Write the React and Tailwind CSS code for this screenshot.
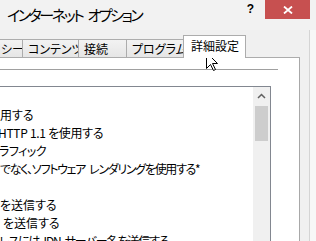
import React from "react";

const jp = "font-['Noto_Sans_CJK_JP','Noto_Sans',sans-serif] [font-feature-settings:'palt']";

// 左側が切れている設定リストの行（語の区切りは配列で持つ）
const rows = [
  { parts: [], cls: "ml-0" },
  { parts: ["用する"], cls: "ml-0" },
  { parts: ["HTTP 1.1 を使用する"], cls: "-ml-[2px] tracking-[-0.3px]" },
  { parts: ["ラフィック"], cls: "-ml-[1px] tracking-[-0.5px]" },
  { parts: ["でなく、ソフトウェア", "レンダリングを使用する*"], cls: "ml-0 tracking-[-1.3px]" },
  { parts: [], cls: "ml-0" },
  { parts: ["を送信する"], cls: "ml-0" },
  { parts: ["を送信する"], cls: "ml-[3px]" },
  { parts: ["レスには", "IDN", "サーバー名を送信する"], cls: "-ml-[1px] tracking-[-1.1px]" },
];

const Tab = ({ label, w }) => (
  <div
    className={`-ml-px h-[18px] border border-b-0 border-[#acacac] bg-gradient-to-b from-[#f2f2f2] to-[#e6e6e6] pl-[5px] text-[12px] leading-[17px] whitespace-nowrap ${w}`}
  >
    {label}
  </div>
);

const Cursor = () => (
  <svg width="13" height="20" viewBox="0 0 13 20" className="absolute left-[206px] top-[52px]">
    <path
      d="M0.5 0.5 L0.5 16.5 L4.5 12.5 L7.5 18.5 L9.5 17.5 L6.5 11.5 L11.5 11.5 Z"
      fill="#fff"
      stroke="#000"
      strokeWidth="1"
    />
  </svg>
);

export default function App() {
  return (
    <div className={`relative w-[316px] h-[241px] overflow-hidden bg-[#f0f0f0] text-black ${jp}`}>
      {/* タイトルバー */}
      <div className="flex items-start h-[30px] bg-[#f2f2f2]">
        <div className="flex gap-[5px] pl-[7px] text-[15px] leading-[30px] tracking-[-2.4px] whitespace-nowrap">
          <span>インターネット</span>
          <span>オプション</span>
        </div>
        <div className="flex-1" />
        <span className="mt-[2px] text-[12px] leading-[14px] font-bold font-['Liberation_Sans',sans-serif]">
          ?
        </span>
        <div className="ml-[11px] mr-[6px] w-[45px] h-[19px] bg-[#c75050] flex items-center justify-center">
          <svg width="10" height="8" viewBox="0 0 10 8">
            <path d="M1 0.5 L9 7.5 M9 0.5 L1 7.5" stroke="#fff" strokeWidth="1.8" />
          </svg>
        </div>
      </div>

      <div className="flex">
        <div className="w-[300px]">
          {/* タブ */}
          <div className="flex items-end h-[28px] border-b border-[#acacac]">
            <Tab label="シー" w="w-[24px] !pl-[1px]" />
            <Tab label="コンテンツ" w="w-[57px]" />
            <Tab label="接続" w="w-[49px]" />
            <Tab label="プログラム" w="w-[58px]" />
            <div className="relative z-10 -ml-px -mb-px w-[63px] h-[23px] border border-b-0 border-[#acacac] bg-white pl-[7px] text-[12px] leading-[20px] whitespace-nowrap">
              詳細設定
            </div>
          </div>

          {/* タブの中身 */}
          <div className="h-[183px] bg-white border-r border-[#a8a8a8]">
            <div className="pt-[11px]">
              <div className="w-[278px] h-px bg-[#a0a0a0]" />
            </div>
            <div className="mt-[16px] w-[271px] h-[160px] border-t border-r border-[#828790] flex">
              <div className="flex-1 overflow-hidden pt-[1px] text-[12px] leading-[18px] whitespace-nowrap">
                {rows.map((r, i) => (
                  <div key={i} className={`flex gap-[4px] h-[18px] ${r.cls}`}>
                    {r.parts.map((p, j) => (
                      <span key={j}>{p}</span>
                    ))}
                  </div>
                ))}
              </div>
              <div className="w-[17px] bg-[#f0f0f0] flex flex-col items-center">
                <div className="h-[17px] flex items-center justify-center">
                  <svg width="9" height="6" viewBox="0 0 9 6">
                    <path d="M1 5 L4.5 1.5 L8 5" fill="none" stroke="#606060" strokeWidth="1.5" />
                  </svg>
                </div>
                <div className="mt-[2px] w-[13px] h-[35px] bg-[#cdcdcd]" />
              </div>
            </div>
          </div>
        </div>
        <div className="w-[9px]" />
        <div className="w-[7px] h-[211px] border-l border-[#d4d4d4] bg-[#f7f7f7]" />
      </div>

      <Cursor />
    </div>
  );
}
